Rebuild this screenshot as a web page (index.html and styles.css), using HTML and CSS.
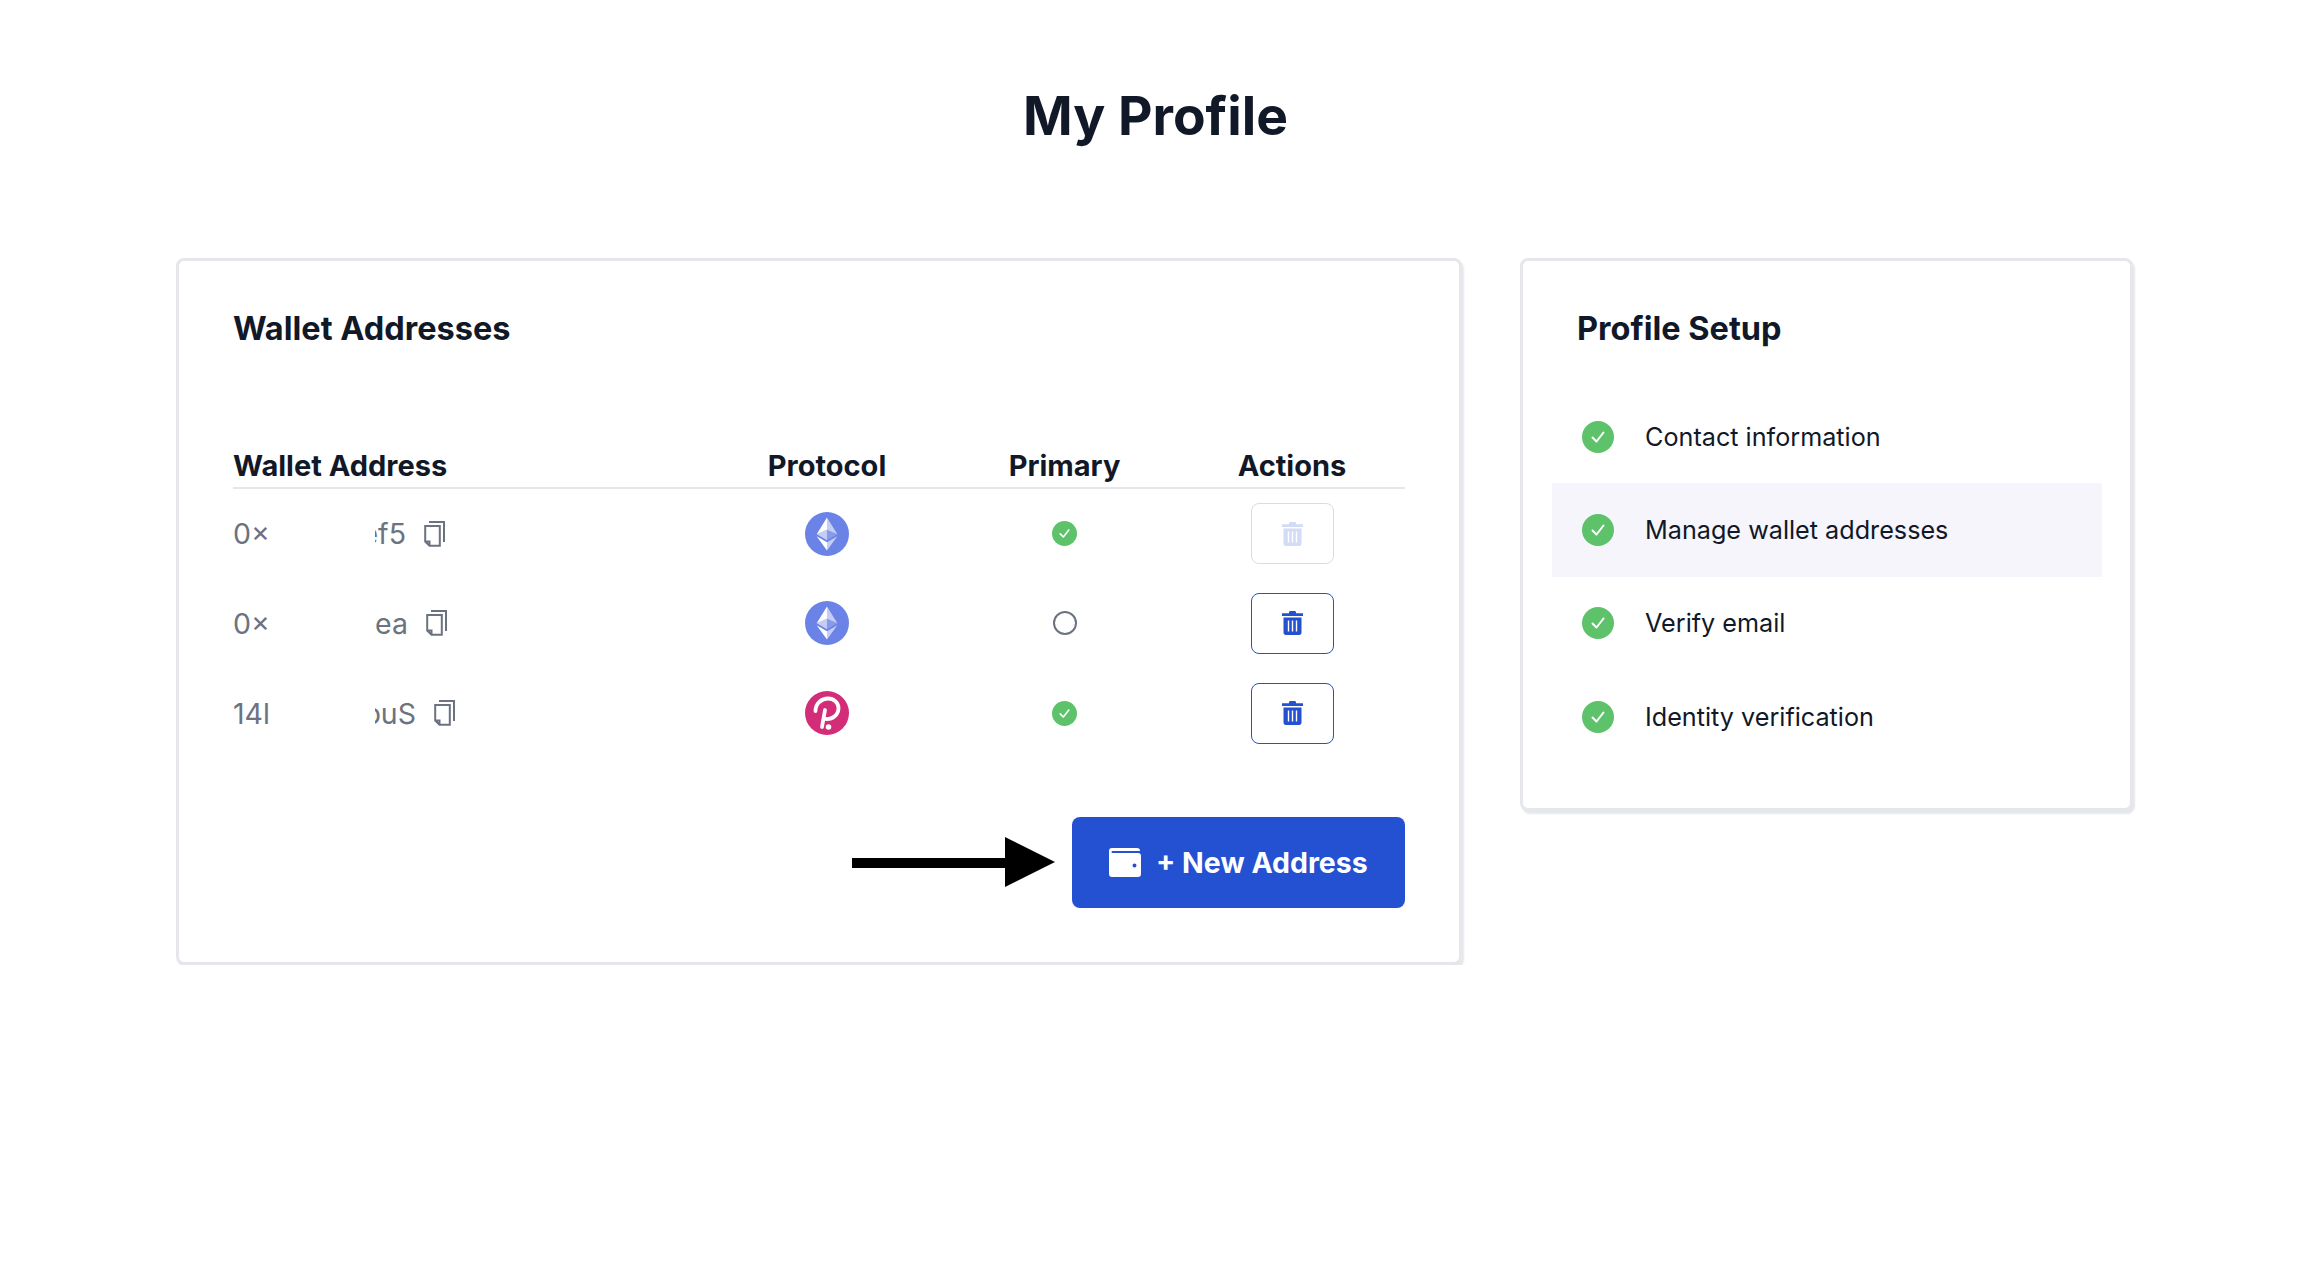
FILE: index.html
```html
<!DOCTYPE html>
<html lang="en">
<head>
  <meta charset="UTF-8" />
  <title>My Profile</title>
  <link rel="stylesheet" href="styles.css">
</head>
<body>
  <svg class="icon-defs" width="0" height="0">
    <defs>
      <symbol id="eth" viewBox="0 0 32 32">
        <circle cx="16" cy="16" r="16" fill="#6b83e6"/>
        <path fill="#fff" fill-opacity=".6" d="M16 4v8.87l7.5 3.35z"/>
        <path fill="#fff" d="M16 4L8.5 16.22 16 12.87z"/>
        <path fill="#fff" fill-opacity=".6" d="M16 21.97V28l7.5-10.38z"/>
        <path fill="#fff" d="M16 28v-6.03L8.5 17.62z"/>
        <path fill="#fff" fill-opacity=".2" d="M16 20.57l7.5-4.35-7.5-3.35z"/>
        <path fill="#fff" fill-opacity=".6" d="M8.5 16.22l7.5 4.35v-7.7z"/>
      </symbol>
      <symbol id="dot" viewBox="0 0 44 44">
        <circle cx="22" cy="22" r="22" fill="#d32c78"/>
        <path d="M10.500 20C10.500 12 17 7.500 23 7.500S33.500 12 33.500 17c0 7-6 11.500-12.500 11M20 19l-3 17" fill="none" stroke="#fff" stroke-width="3.800" stroke-linecap="round"/>
        <circle cx="23.500" cy="36" r="2.800" fill="#fff"/>
      </symbol>
      <symbol id="check" viewBox="0 0 32 32">
        <circle cx="16" cy="16" r="16" fill="#5ec26a"/>
        <path d="M10.500 16.500l4 4 7-9" fill="none" stroke="#fff" stroke-width="2" stroke-linecap="round" stroke-linejoin="round"/>
      </symbol>
      <symbol id="trash" viewBox="0 0 21 24">
        <path d="M7 2.200V1.400C7 .6 7.600 0 8.400 0h4.200c.8 0 1.400.6 1.400 1.400v.8h7v2.800H0V2.200z"/>
        <path fill-rule="evenodd" d="M1.500 6.500h18v15.300c0 1.200-1 2.200-2.200 2.200H3.700c-1.200 0-2.200-1-2.200-2.200zM5.800 9.500v11h1.400v-11zM9.800 9.500v11h1.400v-11zM13.800 9.500v11h1.400v-11z"/>
      </symbol>
      <symbol id="copy" viewBox="0 0 21 26">
        <path d="M5 1h15v20M1.200 5h14.600v19.800H5.500L1.200 20.500zM1.200 20.500h4.300v4.300" fill="none" stroke="currentColor" stroke-width="2"/>
      </symbol>
    </defs>
  </svg>

  <div class="page">
    <h1>My Profile</h1>
    <div class="cards">

      <!-- Wallets -->
      <section class="card">
        <h2>Wallet Addresses</h2>
        <table class="wallets">
          <colgroup>
            <col class="col-address"><col class="col-protocol"><col class="col-primary"><col class="col-actions">
          </colgroup>
          <thead>
            <tr><th class="left">Wallet Address</th><th>Protocol</th><th>Primary</th><th>Actions</th></tr>
          </thead>
          <tbody>
            <tr>
              <td class="left">
                <div class="address">
                  <span class="addr-start">0×</span><span class="addr-end end-f5"><span>ef5</span></span>
                  <svg class="copy"><use href="#copy"/></svg>
                </div>
              </td>
              <td><svg class="coin"><use href="#eth"/></svg></td>
              <td><svg class="primary-on"><use href="#check"/></svg></td>
              <td><button class="btn-delete disabled"><svg class="trash"><use href="#trash"/></svg></button></td>
            </tr>
            <tr>
              <td class="left">
                <div class="address">
                  <span class="addr-start">0×</span><span class="addr-end end-ea"><span>ea</span></span>
                  <svg class="copy"><use href="#copy"/></svg>
                </div>
              </td>
              <td><svg class="coin"><use href="#eth"/></svg></td>
              <td><span class="primary-off"></span></td>
              <td><button class="btn-delete"><svg class="trash"><use href="#trash"/></svg></button></td>
            </tr>
            <tr>
              <td class="left">
                <div class="address">
                  <span class="addr-start">14l</span><span class="addr-end end-us"><span>puS</span></span>
                  <svg class="copy"><use href="#copy"/></svg>
                </div>
              </td>
              <td><svg class="coin"><use href="#dot"/></svg></td>
              <td><svg class="primary-on"><use href="#check"/></svg></td>
              <td><button class="btn-delete"><svg class="trash"><use href="#trash"/></svg></button></td>
            </tr>
          </tbody>
        </table>

        <div class="card-footer">
          <svg class="arrow" viewBox="3 0 203 50"><path d="M0 21h156V0l50 25-50 25V31H0z"/></svg>
          <button class="btn-new">
            <svg class="wallet" viewBox="0 0 32 29"><path fill-rule="evenodd" d="M3 0h25a3 3 0 0 1 3 3H3.500a1 1 0 0 0 0 2H29a3 3 0 0 1 3 3v18a3 3 0 0 1-3 3H3a3 3 0 0 1-3-3V3a3 3 0 0 1 3-3zm22.500 15.500a2 2 0 1 0 0 4 2 2 0 0 0 0-4z"/></svg>
            + New Address
          </button>
        </div>
      </section>

      <!-- Setup steps -->
      <aside class="card card-side">
        <h2>Profile Setup</h2>
        <ul class="steps">
          <li><svg class="step-check"><use href="#check"/></svg>Contact information</li>
          <li class="active"><svg class="step-check"><use href="#check"/></svg>Manage wallet addresses</li>
          <li><svg class="step-check"><use href="#check"/></svg>Verify email</li>
          <li><svg class="step-check"><use href="#check"/></svg>Identity verification</li>
        </ul>
      </aside>

    </div>
  </div>
</body>
</html>
```

FILE: styles.css
```css
* {
  box-sizing: border-box;
  margin: 0;
  padding: 0;
}

body {
  font-family: Inter, "Noto Sans", sans-serif;
  color: #111827;
  background-color: #fff;
}

.icon-defs {
  display: block;
  height: 0;
}

.page {
  width: 1959px;
  margin-left: 176px;
  padding-top: 84px;
}

h1 {
  font-size: 53.300px;
  line-height: 64px;
  font-weight: 700;
  text-align: center;
  margin-bottom: 110px;
}

.cards {
  display: grid;
  grid-template-columns: 1286px 613px;
  gap: 58px;
  align-items: start;
}

.card {
  background-color: #fff;
  border: 3px solid #e5e7eb;
  border-radius: 8px;
  box-shadow: 2px 3px 2px #e5e7eb;
  padding: 48px 53px 54px 54px;
}

.card-side {
  padding: 48px 28px 45px 29px;
}

.card-side h2 {
  padding-left: 25px;
}

h2 {
  font-size: 32.500px;
  line-height: 40px;
  font-weight: 700;
}

/* table */
.wallets {
  width: 1172px;
  margin-top: 94px;
  border-collapse: collapse;
  table-layout: fixed;
}

.col-address { width: 471px; }
.col-protocol { width: 246px; }
.col-primary { width: 229px; }
.col-actions { width: 226px; }

.wallets th {
  height: 44px;
  padding-top: 1px;
  font-size: 29px;
  line-height: 43px;
  font-weight: 700;
  text-align: center;
  border-bottom: 2px solid #e5e7eb;
}

.wallets td {
  height: 90px;
  text-align: center;
  vertical-align: middle;
}

.wallets .left {
  text-align: left;
}

.address {
  display: flex;
  align-items: center;
  font-size: 28.500px;
  color: #6b7280;
}

.addr-start {
  width: 142px;
  white-space: nowrap;
}

.addr-end {
  display: flex;
  justify-content: flex-end;
  overflow: hidden;
  white-space: nowrap;
}

.end-f5 { width: 31px; }
.end-ea { width: 33px; }
.end-us { width: 41px; }

.copy {
  width: 21px;
  height: 26px;
  margin-left: 18px;
  color: #6b7280;
}

.coin {
  display: block;
  width: 44px;
  height: 44px;
  margin: 0 auto;
}

.primary-on {
  display: block;
  width: 25px;
  height: 25px;
  margin: 0 auto;
}

.primary-off {
  display: block;
  width: 24px;
  height: 24px;
  margin: 0 auto;
  border: 2px solid #6b7280;
  border-radius: 50%;
}

.btn-delete {
  display: block;
  width: 83px;
  height: 61px;
  margin: 0 auto;
  background: #fff;
  border: 1.500px solid #2351d1;
  border-radius: 8px;
  color: #2351d1;
}

.btn-delete.disabled {
  border-color: #d3dcf6;
  color: #d3dcf6;
}

.trash {
  display: block;
  width: 21px;
  height: 24px;
  margin: 0 auto;
  fill: currentColor;
}

/* footer */
.card-footer {
  display: flex;
  justify-content: flex-end;
  align-items: center;
  gap: 17px;
  margin-top: 59px;
  width: 1172px;
}

.arrow {
  width: 203px;
  height: 50px;
  margin-top: -2px;
  fill: #000;
}

.btn-new {
  display: flex;
  align-items: center;
  gap: 15px;
  width: 333px;
  height: 91px;
  padding-left: 37px;
  font-family: inherit;
  font-size: 28.500px;
  font-weight: 700;
  color: #fff;
  background-color: #2351d1;
  border: none;
  border-radius: 8px;
}

.wallet {
  width: 32px;
  height: 29px;
  fill: #fff;
}

/* steps */
.steps {
  list-style: none;
  margin-top: 41px;
}

.steps li {
  display: flex;
  align-items: center;
  gap: 31px;
  height: 93.330px;
  padding-left: 30px;
  font-size: 25.200px;
}

.steps li.active {
  background-color: #f5f5fb;
}

.step-check {
  width: 32px;
  height: 32px;
}
```
